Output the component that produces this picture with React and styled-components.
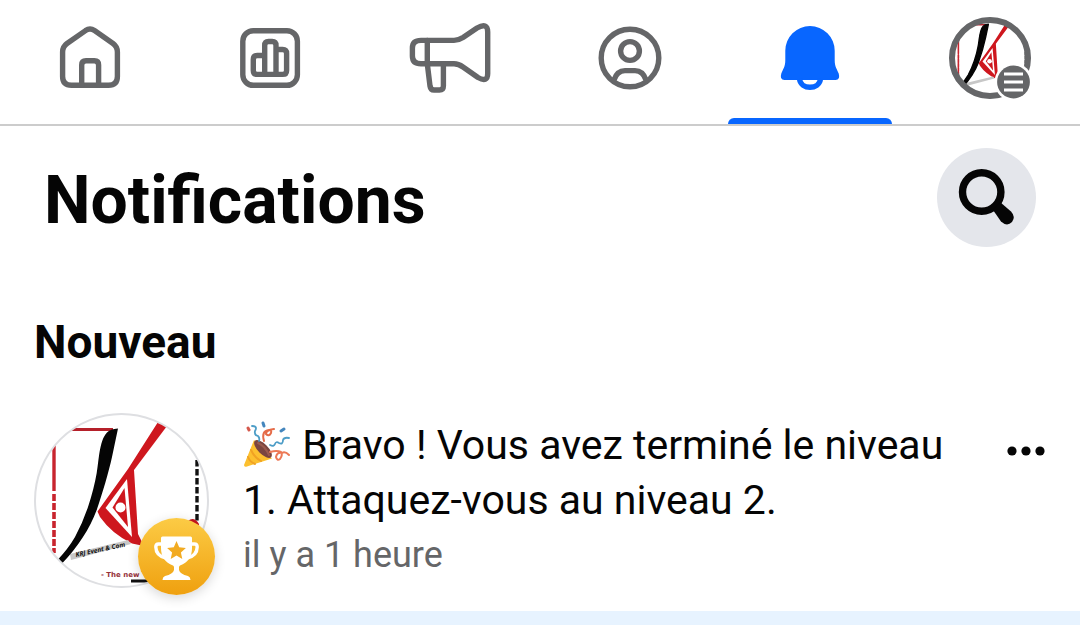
import React from 'react';
import styled, { createGlobalStyle } from 'styled-components';

const GlobalStyle = createGlobalStyle`
  * {
    box-sizing: border-box;
  }

  body {
    margin: 0;
    background: #ffffff;
    color: #050505;
    font-family: Roboto, 'Liberation Sans', sans-serif;
  }
`;

const Page = styled.div`
  min-height: 100vh;
  display: flex;
  flex-direction: column;
`;

const TabBar = styled.nav`
  display: grid;
  grid-template-columns: repeat(6, 1fr);
  height: 126px;
  border-bottom: 2px solid #cccccc;
`;

const Tab = styled.a`
  position: relative;
  display: flex;
  align-items: center;
  justify-content: center;
  padding-bottom: 10px;
  color: ${(props) => (props.$active ? '#0866ff' : '#656668')};

  /* Blue bar under the current tab */
  &::after {
    content: '';
    display: ${(props) => (props.$active ? 'block' : 'none')};
    position: absolute;
    left: 8px;
    right: 8px;
    bottom: 0;
    height: 6px;
    border-radius: 6px 6px 0 0;
    background: #0866ff;
  }
`;

const TabIcon = styled.svg`
  width: 90px;
  height: 90px;
  fill: none;
  stroke: currentColor;
  stroke-width: 5.4;
  stroke-linecap: round;
  stroke-linejoin: round;
`;

const Header = styled.header`
  display: flex;
  align-items: center;
  justify-content: space-between;
  padding: 22px 44px 0;
`;

const Title = styled.h1`
  margin: 0;
  padding-top: 6px;
  font-size: 66px;
  line-height: 80px;
  font-weight: 700;
`;

const SearchButton = styled.button`
  width: 99px;
  height: 99px;
  padding: 0;
  border: none;
  border-radius: 50%;
  background: #e4e6eb;
  color: #050505;
  cursor: pointer;
`;

const SectionTitle = styled.h2`
  margin: 0;
  padding: 68px 34px 43px;
  font-size: 46px;
  line-height: 55px;
  font-weight: 700;
`;

const NotificationRow = styled.article`
  display: flex;
  align-items: flex-start;
  padding: 0 34px 23px;
`;

const Avatar = styled.div`
  position: relative;
  flex: none;
  width: 175px;
  height: 175px;
  margin-right: 34px;
`;

const Badge = styled.span`
  position: absolute;
  right: -6px;
  bottom: -7px;
  width: 77px;
  height: 77px;
  border-radius: 50%;
  background: linear-gradient(#fccb45, #efa00f);
  box-shadow: 0 3px 12px rgba(0, 0, 0, 0.16);
`;

const Content = styled.div`
  flex: 1;
  padding: 5px 32px 0 0;
`;

const Message = styled.p`
  margin: 0;
  font-size: 41px;
  line-height: 55px;
`;

const Emoji = styled.svg`
  width: 49px;
  height: 48px;
  vertical-align: -10px;
`;

const Time = styled.time`
  display: block;
  font-size: 36px;
  line-height: 55px;
  color: #656668;
`;

const MoreButton = styled.button`
  flex: none;
  width: 40px;
  height: 40px;
  margin-top: 18px;
  padding: 0;
  border: none;
  background: none;
  color: #050505;
  cursor: pointer;
`;

const UnreadRow = styled.div`
  flex: 1;
  min-height: 14px;
  background: #e7f3ff;
`;

// The small version in the tab bar leaves out the captions
const PageLogo = ({ small, ...props }) => (
  <svg viewBox="0 0 175 175" {...props}>
    <defs>
      <clipPath id="logoClip">
        <circle cx="87.5" cy="87.5" r="86.5" />
      </clipPath>
    </defs>
    <circle cx="87.5" cy="87.5" r="86.5" fill="#fff" />
    <g clipPath="url(#logoClip)">
      <path d="M36 16.5H79" stroke="#b5202a" strokeWidth="3" />
      <path d="M20 30V78" stroke="#c8242e" strokeWidth="3.4" />
      <path d="M20 81V140" stroke="#c8242e" strokeWidth="3.6" strokeDasharray="7 2" />
      <path d="M163 47V108" stroke="#111" strokeWidth="3.4" strokeDasharray="6.5 2.5" />
      <path d="M154 108Q160 103 165 111V116H154Z" fill="#c8161d" />
      <path
        d="M124 9L133 13L100 57L104 121L110 133L98 130.5Q78 121 66 104L63.5 98.5L94 56Z"
        fill="#ce171e"
      />
      <path d="M93 66L71.5 95L98 124Z" fill="#fff" />
      <path d="M90.5 75L78.5 94.5L94 114Z" fill="#ce171e" />
      <circle cx="86.5" cy="94.5" r="5" fill="#fff" />
      <path d="M36 141L94 127L97 131L37 147Z" fill="#c7c7c7" />
      <path
        d="M73 19.5Q76 16 84 15.5L78 44C75 58 68 82 62.7 97Q57 112 49 124Q40 138 28 150.5L23.5 147Q34 136 41 124Q49 109 54 94C58 82 61 70 62.7 60C65 48 65 28 73 19.5Z"
        fill="#050505"
        stroke={small ? '#050505' : 'none'}
        strokeWidth="3"
      />
      {!small && (
        <>
          <text
            transform="translate(42 144) rotate(-12)"
            fontSize="6.5"
            fontFamily="Open Sans, sans-serif"
            fontWeight="700"
            fontStyle="italic"
            fill="#111"
          >
            KRJ Event &amp; Com
          </text>
          <text
            x="67"
            y="164"
            fontSize="7"
            fontFamily="DejaVu Sans, sans-serif"
            fontWeight="700"
            fill="#96323a"
          >
            - The new
          </text>
          <path d="M97 168H118" stroke="#111" strokeWidth="3" />
        </>
      )}
    </g>
    <circle cx="87.5" cy="87.5" r="86.5" fill="none" stroke="#dedfe2" strokeWidth="2" />
  </svg>
);

const HomeIcon = () => (
  <TabIcon viewBox="0 0 90 90">
    <path d="M40.5 18.6Q45 15.6 49.5 18.6L68 31.5Q72.4 34.8 72.4 40V64.5Q72.4 73.2 63.5 73.2H26.5Q17.6 73.2 17.6 64.5V40Q17.6 34.8 22 31.5Z" />
    <path d="M36.7 73V53Q36.7 48.8 41 48.8H49.4Q53.6 48.8 53.6 53V73" />
  </TabIcon>
);

const InsightsIcon = () => (
  <TabIcon viewBox="0 0 90 90">
    <rect x="17.8" y="18.7" width="54.6" height="54.6" rx="10.5" />
    <path d="M39.7 43.5H32.3Q28.3 43.5 28.3 47.5V58.4Q28.3 62.4 32.3 62.4H57.6Q61.6 62.4 61.6 58.4V41.5Q61.6 37.5 57.6 37.5H51M39.7 62V33.5Q39.7 29.5 43.5 29.5H47.2Q51 29.5 51 33.5V62" />
  </TabIcon>
);

const MegaphoneIcon = () => (
  <TabIcon viewBox="0 0 90 90">
    <path d="M16 28.4H49Q53.5 28.4 58 25.5L72 16Q82.7 10 82.7 20V61.5Q82.7 71 73 65.5L58 55Q53.5 51.8 49 51.8H16Q7.4 51.8 7.4 44V36Q7.4 28.4 16 28.4Z" />
    <path d="M22.3 28.4V51.8L25 74Q25.6 78 29 78H34.5Q38.4 78 38.4 74V52" />
  </TabIcon>
);

const ProfileIcon = () => (
  <TabIcon viewBox="0 0 90 90">
    <circle cx="45" cy="46" r="28.8" />
    <circle cx="45" cy="39" r="9.4" />
    <path d="M29 68Q32 58.6 40 58.6H50Q58 58.6 61 68" />
  </TabIcon>
);

const BellIcon = () => (
  <TabIcon viewBox="0 0 90 90">
    <path
      fill="currentColor"
      stroke="none"
      d="M45 14A24.7 24.7 0 0 1 69.7 38.7V48C69.7 55 72 57 73.7 61.5Q75.6 68 70.5 68H19.5Q14.4 68 16.3 61.5C18 57 20.3 55 20.3 48V38.7A24.7 24.7 0 0 1 45 14Z"
    />
    <path d="M34.5 67C36 78 54 78 55.5 67" strokeLinecap="butt" />
  </TabIcon>
);

const MenuIcon = () => (
  <TabIcon viewBox="0 0 90 90">
    <g stroke="none">
      <PageLogo small x="4" y="5" width="82" height="82" />
    </g>
    <circle cx="45" cy="46" r="38" strokeWidth="6" />
    <circle cx="68.5" cy="70" r="19" fill="#fff" stroke="none" />
    <circle cx="68.5" cy="70" r="16.4" fill="currentColor" stroke="none" />
    <path d="M59 62H78M59 70H78M59 78H78" stroke="#fff" strokeWidth="3" strokeLinecap="butt" />
  </TabIcon>
);

const SearchIcon = () => (
  <svg width="99" height="99" viewBox="0 0 99 99" fill="none">
    <circle cx="44.7" cy="44" r="19.2" stroke="currentColor" strokeWidth="7.4" />
    <path fill="currentColor" d="M63 54L74 63.5Q79 69 75 74Q70 79 64 73.5L56 62Z" />
  </svg>
);

const PartyPopper = () => (
  <Emoji viewBox="0 0 49 48" role="img" aria-label="Confettis" fill="none" strokeLinecap="round">
    <path d="M11 19L1 44Q1 46.5 4 45.5L29 37.5Z" fill="#fcc02f" />
    <path d="M8 29Q11 36 18 40M5 36Q7 41 12 43" stroke="#f0a224" strokeWidth="2" />
    <ellipse cx="20" cy="28" rx="11.5" ry="5" transform="rotate(45 20 28)" fill="#7a4540" />
    <path d="M15 22Q22 25 26 34" stroke="#9a5a4e" strokeWidth="2" />
    <path d="M9 5Q15 5 12 10Q11 14 15 15Q17 17 16 20" stroke="#4d9dc7" strokeWidth="1.8" />
    <path d="M21 20Q18 10 26 9Q29 9 28 12Q26 16 23 13Q23 9 31 8" stroke="#e56b48" strokeWidth="2" />
    <path d="M27 24Q31 26 32 23Q33 20 36 22Q40 24 40 19Q41 16 46 17" stroke="#4d9dc7" strokeWidth="1.8" />
    <path d="M27 31Q34 29 38 31Q40 34 37 38Q34 40 33 36Q34 31 39 32Q42 30 46 34" stroke="#ec7956" strokeWidth="2" />
    <path d="M20 2L21 5M41 8L38 10" stroke="#4486bd" strokeWidth="3" />
    <path d="M5 7L6 9" stroke="#d5594d" strokeWidth="3" />
  </Emoji>
);

const TrophyIcon = () => (
  <svg width="77" height="77" viewBox="0 0 77 77" fill="none">
    <path
      d="M24 26H20.5Q17.8 26 17.8 29Q18 38 28 40M53 26H56.5Q59.2 26 59.2 29Q59 38 49 40"
      stroke="#fff"
      strokeWidth="3.4"
    />
    <path
      fill="#fff"
      d="M24.5 18.5H52.5Q54 18.5 54 20V30Q54 43 42 47.5Q41 48 41 49.5V52Q42 56 50 58Q52.5 59 52.5 62H24.5Q24.5 59 27 58Q35 56 36 52V49.5Q36 48 35 47.5Q23 43 23 30V20Q23 18.5 24.5 18.5Z"
    />
    <path
      fill="#f2ab22"
      d="M38.5 23L41.2 29.2L47.9 29.9L42.9 34.4L44.3 41L38.5 37.6L32.7 41L34.1 34.4L29.1 29.9L35.8 29.2Z"
    />
  </svg>
);

const tabs = [
  { id: 'accueil', label: 'Accueil', Icon: HomeIcon },
  { id: 'statistiques', label: 'Statistiques', Icon: InsightsIcon },
  { id: 'publicites', label: 'Publicités', Icon: MegaphoneIcon },
  { id: 'profil', label: 'Profil', Icon: ProfileIcon },
  { id: 'notifications', label: 'Notifications', Icon: BellIcon },
  { id: 'menu', label: 'Menu', Icon: MenuIcon },
];

const App = () => {
  return (
    <Page>
      <GlobalStyle />
      <TabBar>
        {tabs.map(({ id, label, Icon }) => (
          <Tab key={id} href={`#${id}`} aria-label={label} $active={id === 'notifications'}>
            <Icon />
          </Tab>
        ))}
      </TabBar>
      <Header>
        <Title>Notifications</Title>
        <SearchButton type="button" aria-label="Rechercher">
          <SearchIcon />
        </SearchButton>
      </Header>
      <SectionTitle>Nouveau</SectionTitle>
      <NotificationRow>
        <Avatar>
          <PageLogo width="175" height="175" />
          <Badge>
            <TrophyIcon />
          </Badge>
        </Avatar>
        <Content>
          <Message>
            <PartyPopper /> Bravo ! Vous avez terminé le niveau 1. Attaquez-vous au niveau 2.
          </Message>
          <Time>il y a 1 heure</Time>
        </Content>
        <MoreButton type="button" aria-label="Plus d'options">
          <svg width="40" height="40" viewBox="0 0 40 40" fill="currentColor">
            <circle cx="6" cy="20" r="4.6" />
            <circle cx="20" cy="20" r="4.6" />
            <circle cx="34" cy="20" r="4.6" />
          </svg>
        </MoreButton>
      </NotificationRow>
      <UnreadRow />
    </Page>
  );
};

export default App;
